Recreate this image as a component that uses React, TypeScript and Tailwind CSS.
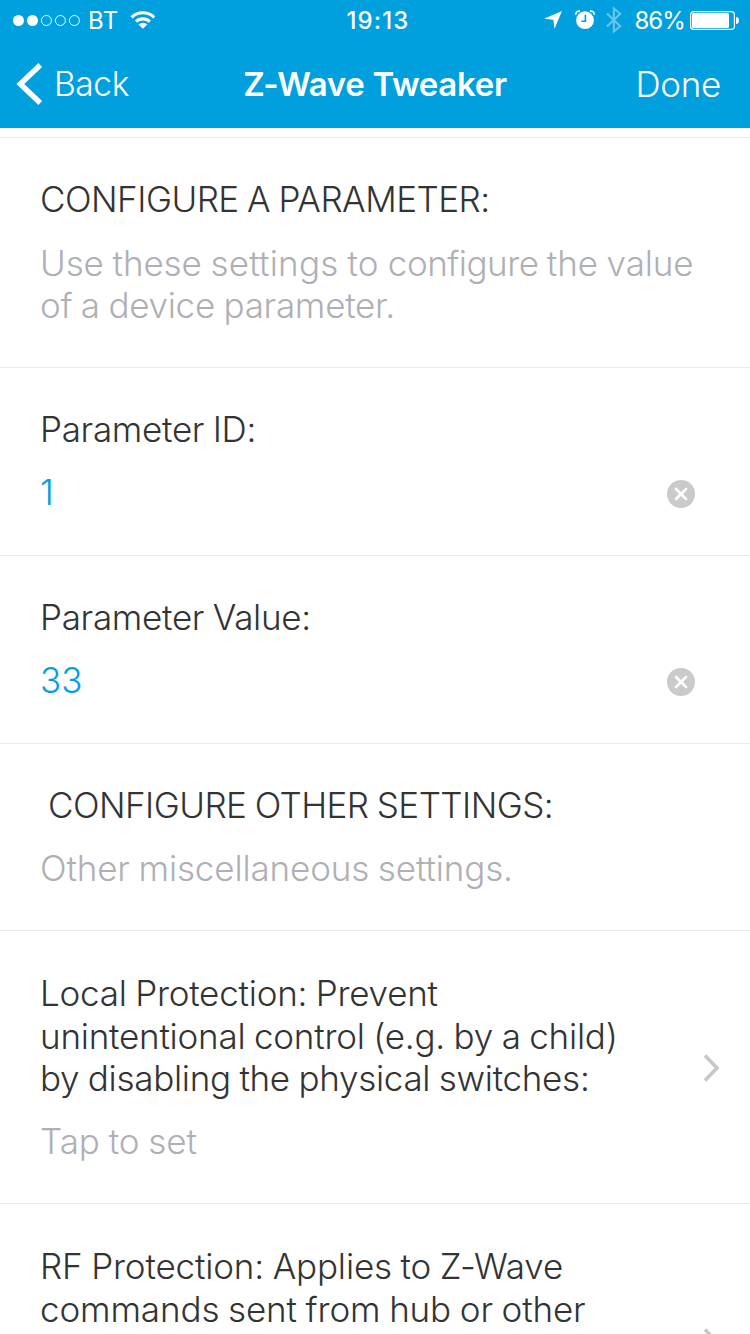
import React from "react";

function StatusBar() {
  return (
    <div className="flex h-10 items-center justify-between pl-[13px] pr-[11px]">
      <div className="flex w-[300px] items-center">
        <svg width="68" height="12" viewBox="0 0 68 12" fill="none" stroke="#fff">
          <circle cx="5.5" cy="6.500" r="5.5" fill="#fff" stroke="none" />
          <circle cx="19.5" cy="6.500" r="5.5" fill="#fff" stroke="none" />
          <circle cx="33.4" cy="6.500" r="5" />
          <circle cx="47.4" cy="6.500" r="5" />
          <circle cx="61.4" cy="6.500" r="5" />
        </svg>
        <span className="ml-[7px] w-[42px] pt-0.5 text-[24px] leading-none tracking-[0.5px]">BT</span>
        <svg width="26" height="20" viewBox="0 0 26 20" fill="none" stroke="#fff" strokeWidth="3.1">
          <path d="M1.6 7.3a16.2 16.2 0 0 1 22.6 0" />
          <path d="M6 11.6a10 10 0 0 1 13.8 0" />
          <path d="M12.9 18.8 8.500 14.6a6.2 6.2 0 0 1 8.800 0z" fill="#fff" stroke="none" />
        </svg>
      </div>
      <span className="pl-1 pt-0.5 text-[24px] font-medium leading-none tracking-[1.1px]">19:13</span>
      <div className="flex w-[300px] items-center justify-end">
        <svg width="18" height="18" viewBox="0 0 18 18" fill="#fff">
          <path d="M18 0 10.4 18 9.4 8.8 0 7.8z" />
        </svg>
        <svg className="ml-[13px]" width="20" height="20" viewBox="0 0 20 20" fill="none" stroke="#fff">
          <circle cx="10" cy="10.2" r="8.9" fill="#fff" stroke="none" />
          <path d="M.8 4.8C.6 2.3 2.2.9 5 1.1M19.2 4.8C19.4 2.3 17.8.9 15 1.1" strokeWidth="1.6" />
          <path d="M10.4 4.8v6.4H6.4" stroke="#009fde" strokeWidth="1.6" />
        </svg>
        <svg className="ml-[11px]" width="16" height="28" viewBox="0 0 16 28" fill="none" stroke="#66c5eb" strokeWidth="2.1">
          <path d="m1 7.500 13.2 12.8-6.3 5.3V2.4l6.3 5.3L1 20.500" />
        </svg>
        <span className="ml-3 whitespace-nowrap pt-0.5 text-[24px] leading-none tracking-[-0.9px]">86%</span>
        <svg className="ml-[5px]" width="49" height="20" viewBox="0 0 49 20" fill="none">
          <rect x=".6" y="1.6" width="43.8" height="17.8" rx="3.2" stroke="#fff" strokeWidth="1.2" />
          <rect x="2" y="3" width="37" height="15" rx="1.6" fill="#fff" />
          <path d="M46 7c2 0 3 1.500 3 3.500S48 14 46 14z" fill="#fff" />
        </svg>
      </div>
    </div>
  );
}

function NavBar() {
  return (
    <div className="grid h-[88px] grid-cols-[200px_1fr_187px] items-center pl-4 pr-[29px]">
      <div className="flex items-center">
        <svg width="27" height="44" viewBox="0 0 27 44" fill="none" stroke="#fff" strokeWidth="5.4">
          <path d="M24.300 3 4.300 22l20 19" />
        </svg>
        <span className="ml-[11px] pt-0.5 text-[33.500px] font-light leading-none tracking-[-0.4px]">Back</span>
      </div>
      <h1 className="whitespace-nowrap pt-px text-center text-[33px] font-semibold leading-none tracking-[-0.3px]">
        Z-Wave Tweaker
      </h1>
      <span className="text-right text-[35px] font-light leading-none tracking-[-0.3px]">Done</span>
    </div>
  );
}

function ClearIcon() {
  return (
    <svg className="mr-[55px] mt-0.5" width="28" height="28" viewBox="0 0 28 28">
      <circle cx="14" cy="14" r="14" fill="#cacaca" />
      <path d="m9 9 10 10M19 9 9 19" stroke="#fff" strokeWidth="2.800" strokeLinecap="round" />
    </svg>
  );
}

function Chevron() {
  return (
    <svg className="mr-[30px] mt-0.5 shrink-0" width="17" height="28" viewBox="0 0 17 28" fill="none" stroke="#c7c7cc" strokeWidth="3.600">
      <path d="m2 1.600 12 12.400L2 26.400" />
    </svg>
  );
}

function Field({ label, value }: { label: string; value: string }) {
  return (
    <section className="flex h-[188px] flex-col border-b border-[#ebebeb] pl-10 pt-10">
      <div className="tracking-[-0.3px]">{label}</div>
      <div className="mt-5 flex items-center justify-between text-[#009fde]">
        <span>{value}</span>
        <ClearIcon />
      </div>
    </section>
  );
}

export default function App() {
  return (
    <div className="flex h-[1334px] w-[750px] flex-col overflow-hidden bg-white font-['Inter',sans-serif]">
      <header className="h-32 shrink-0 bg-[#009fde] text-white">
        <StatusBar />
        <NavBar />
      </header>
      <main className="whitespace-nowrap text-[35px] font-light leading-[43px] text-[#333333] [word-spacing:-1px] *:shrink-0">
        <div className="h-[10px] border-b border-[#ebebeb]" />
        <section className="h-[230px] border-b border-[#ebebeb] pl-10 pt-10">
          <h2 className="tracking-[-0.5px]">CONFIGURE A PARAMETER:</h2>
          <div className="mt-[21px] leading-[42px] text-[#afafb5]">
            <p className="tracking-[-0.1px]">
              Use these <span className="tracking-[0.2px]">settings to </span>
              <span className="tracking-[-0.5px]">configure </span>
              the value
            </p>
            <p className="tracking-[-0.27px]">of a device parameter.</p>
          </div>
        </section>
        <Field label="Parameter ID:" value="1" />
        <Field label="Parameter Value:" value="33" />
        <section className="h-[187px] border-b border-[#ebebeb] pl-10 pt-10">
          <h2 className="pl-2 tracking-[-0.54px]">CONFIGURE OTHER SETTINGS:</h2>
          <p className="mt-5 tracking-[-0.14px] text-[#afafb5]">Other miscellaneous settings.</p>
        </section>
        <section className="flex h-[273px] justify-between border-b border-[#ebebeb] pl-10">
          <div className="pt-[41px]">
            <p className="tracking-[-0.24px]">Local Protection: Prevent</p>
            <p className="tracking-[-0.23px]">unintentional control (e.g. by a child)</p>
            <p className="leading-[41px] tracking-[-0.29px]">by disabling the physical switches:</p>
            <p className="mt-[21px] tracking-[-0.05px] text-[#afafb5]">Tap to set</p>
          </div>
          <div className="flex items-center">
            <Chevron />
          </div>
        </section>
        <section className="flex h-[273px] justify-between pl-10">
          <div className="pt-[41px]">
            <p className="tracking-[-0.16px]">RF Protection: Applies to Z-Wave</p>
            <p className="tracking-[-0.13px]">commands sent from hub or other</p>
          </div>
          <div className="flex items-center">
            <Chevron />
          </div>
        </section>
      </main>
    </div>
  );
}
